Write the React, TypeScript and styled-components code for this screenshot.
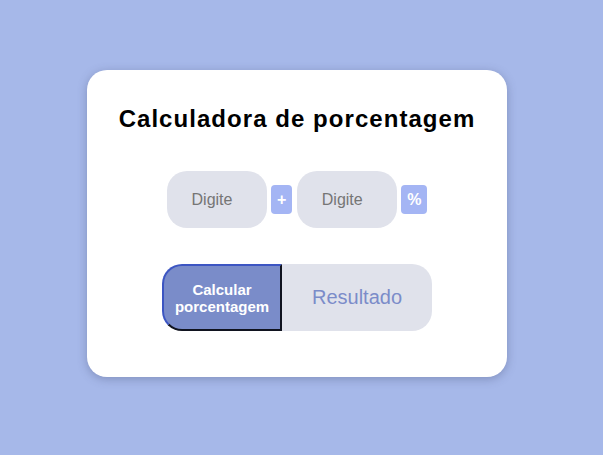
import React from "react";
import styled, { createGlobalStyle } from "styled-components";

const Global = createGlobalStyle`
  html, body { margin: 0; padding: 0; }
  body {
    background: #a6b8e9;
    font-family: "Liberation Sans", Arial, sans-serif;
    width: 603px;
    height: 455px;
    overflow: hidden;
  }
`;

const Page = styled.div`
  padding: 70px 0 0 87px;
`;

const Card = styled.div`
  box-sizing: border-box;
  width: 420px;
  height: 307px;
  background: #ffffff;
  border-radius: 20px;
  box-shadow: 0 2px 10px rgba(60, 70, 110, 0.35);
  display: flex;
  flex-direction: column;
  align-items: center;
  padding-top: 35px;
`;

const Title = styled.h1`
  margin: 0;
  font-size: 24px;
  font-weight: bold;
  letter-spacing: 1.05px;
  color: #000;
  line-height: 28px;
`;

const InputRow = styled.div`
  display: flex;
  align-items: center;
  gap: 4.45px;
  margin-top: 38px;
`;

const Field = styled.input`
  box-sizing: border-box;
  width: 100px;
  height: 57px;
  border: none;
  outline: none;
  border-radius: 20px;
  background: #e0e2eb;
  padding: 0 0 0 25px;
  font-family: "Liberation Sans", Arial, sans-serif;
  font-size: 16px;
  color: #333;
  &::placeholder { color: #757575; }
`;

const Badge = styled.span`
  box-sizing: border-box;
  height: 29px;
  padding: 0 6px;
  border-radius: 4px;
  background: #a4b5f4;
  color: #ffffff;
  font-weight: bold;
  font-size: 16px;
  line-height: 29px;
`;

const ButtonRow = styled.div`
  display: flex;
  margin-top: 36px;
`;

const CalcButton = styled.button`
  box-sizing: border-box;
  width: 120px;
  height: 67px;
  background: #7a8cc9;
  border: 2px solid;
  border-color: #3c55c2 #10131f #10131f #3c55c2;
  border-radius: 20px 0 0 20px;
  color: #ffffff;
  font-family: "Liberation Sans", Arial, sans-serif;
  font-weight: bold;
  font-size: 15px;
  line-height: 17px;
  padding: 0 2px;
  cursor: pointer;
`;

const Result = styled.div`
  box-sizing: border-box;
  width: 150px;
  height: 67px;
  background: #e0e2eb;
  border-radius: 0 20px 20px 0;
  display: flex;
  align-items: center;
  justify-content: center;
  color: #7b8cc9;
  font-size: 20px;
`;

export default function App() {
  return (
    <>
      <Global />
      <Page>
        <Card>
          <Title>Calculadora de porcentagem</Title>
          <InputRow>
            <Field placeholder="Digite" />
            <Badge>+</Badge>
            <Field placeholder="Digite" />
            <Badge>%</Badge>
          </InputRow>
          <ButtonRow>
            <CalcButton>Calcular porcentagem</CalcButton>
            <Result>Resultado</Result>
          </ButtonRow>
        </Card>
      </Page>
    </>
  );
}
